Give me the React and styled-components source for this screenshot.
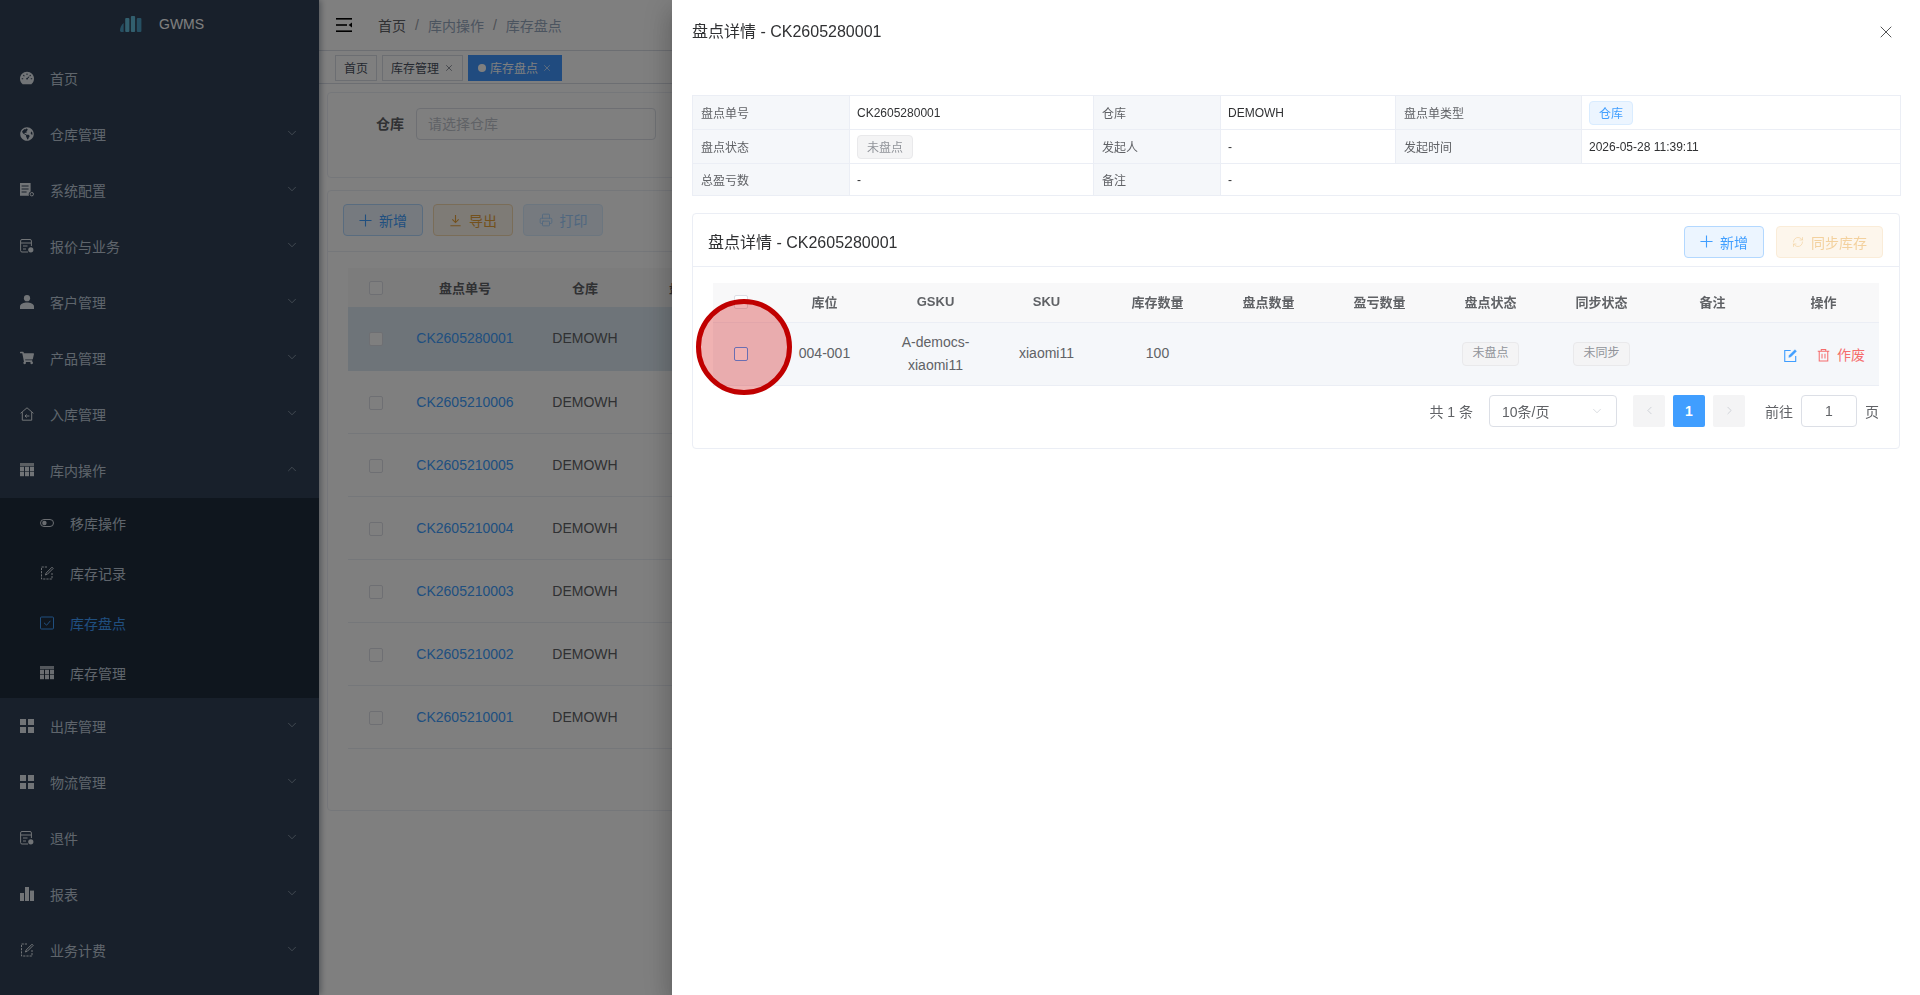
import React from 'react';
import styled, { createGlobalStyle } from 'styled-components';
import { ChevronDown, ChevronUp, ChevronLeft, ChevronRight, Printer, RefreshCw, X } from 'lucide-react';
import { AiFillDashboard } from 'react-icons/ai';
import { FaGlobeAmericas, FaShoppingCart } from 'react-icons/fa';

const GlobalStyle = createGlobalStyle`
  html, body {
    margin: 0;
    height: 100%;
    overflow: hidden;
    background: #fff;
    font-family: "Liberation Sans", "Noto Sans CJK SC", sans-serif;
    font-size: 14px;
    color: #606266;
  }
  * { box-sizing: border-box; }
`;

const Page = styled.div`
  display: flex;
  width: 1920px;
  height: 995px;
  overflow: hidden;
`;

/* ---------- sidebar ---------- */
const Sidebar = styled.aside`
  width: 319px;
  flex-shrink: 0;
  background: #304156;
  box-shadow: 2px 0 6px rgba(0, 21, 41, 0.35);
  z-index: 2;
`;

const Logo = styled.div`
  height: 50px;
  padding: 0 0 2px 120px;
  display: flex;
  align-items: center;
  gap: 17px;
  font-size: 14px;
  color: #ffffff;
`;

const MenuRow = styled.div`
  height: 56px;
  padding: 0 20px;
  display: flex;
  align-items: center;
  gap: 16px;
  font-size: 14px;
  color: #bfcbd9;
  svg { flex-shrink: 0; }
  .ic { color: #e3e8ee; }
  .gauge { margin: 0 -1px; }
  .arrow { margin-left: auto; margin-top: -2px; color: #bfcbd9; }
`;

const SubMenu = styled.div`
  background: #1f2d3d;
`;

const SubRow = styled.div`
  height: 50px;
  padding-left: 40px;
  display: flex;
  align-items: center;
  gap: 16px;
  color: ${p => (p.$active ? '#409eff' : '#bfcbd9')};
  .ic { color: ${p => (p.$active ? '#409eff' : '#d5dbe3')}; }
`;

/* ---------- page behind the drawer ---------- */
const Main = styled.main`
  flex: 1;
  min-width: 0;
`;

const TopBar = styled.div`
  height: 51px;
  border-bottom: 1px solid #d8dce5;
  padding-left: 17px;
  display: flex;
  align-items: center;
`;

const Crumbs = styled.div`
  margin-left: 26px;
  display: flex;
  align-items: center;
  gap: 9px;
  color: #97a8be;
  b { font-weight: 400; color: #606266; }
  i { font-style: normal; color: #9aa0a8; }
`;

const TagsBar = styled.div`
  height: 33px;
  border-bottom: 1px solid #d8dce5;
  padding: 4px 0 0 16px;
  display: flex;
  gap: 5px;
`;

const PageTab = styled.div`
  height: 26px;
  padding: 0 ${p => (p.$active ? 9 : 8)}px 1px;
  display: flex;
  align-items: center;
  gap: ${p => (p.$active ? 4 : 5)}px;
  font-size: 12px;
  color: ${p => (p.$active ? '#ffffff' : '#495060')};
  background: ${p => (p.$active ? '#4096ff' : '#fff')};
  border: 1px solid ${p => (p.$active ? '#4096ff' : '#d8dce5')};
`;

const Dot = styled.span`
  width: 8px;
  height: 8px;
  border-radius: 50%;
  background: #fff;
`;

const Content = styled.div`
  padding: 8px;
`;

const Card = styled.div`
  background: #fff;
  border: 1px solid #ebeef5;
  border-radius: 4px;
`;

const FilterCard = styled(Card)`
  height: 86px;
  margin-bottom: 12px;
  padding-top: 15px;
  display: flex;
  align-items: flex-start;
`;

const FilterLabel = styled.label`
  width: 88px;
  height: 32px;
  padding-right: 12px;
  line-height: 32px;
  text-align: right;
  font-weight: 700;
`;

const FilterInput = styled.div`
  width: 240px;
  height: 32px;
  padding: 0 11px;
  line-height: 30px;
  border: 1px solid #dcdfe6;
  border-radius: 4px;
  color: #c0c4cc;
`;

const ListCard = styled(Card)`
  height: 621px;
`;

const Toolbar = styled.div`
  height: 61px;
  padding: 13px 15px 0;
  display: flex;
  gap: 10px;
  border-bottom: 1px solid #ebeef5;
`;

const tones = {
  primary: ['#ecf5ff', '#b3d8ff', '#409eff'],
  warning: ['#fdf6ec', '#f5dab1', '#e6a23c'],
  primaryOff: ['#ecf5ff', '#d9ecff', '#a0cfff'],
  warningOff: ['#fdf6ec', '#faecd8', '#f3d19e'],
};

const PlainButton = styled.button`
  height: 32px;
  width: ${p => p.$width || 80}px;
  padding: 0;
  display: inline-flex;
  align-items: center;
  justify-content: center;
  gap: 7px;
  font-family: inherit;
  font-size: 14px;
  border-radius: 4px;
  background: ${p => tones[p.$tone][0]};
  border: 1px solid ${p => tones[p.$tone][1]};
  color: ${p => tones[p.$tone][2]};
`;

const ListTable = styled.table`
  margin: 16px 0 0 20px;
  width: 1500px;
  table-layout: fixed;
  border-collapse: collapse;
`;

const ListHead = styled.th`
  width: ${p => p.$w ? `${p.$w}px` : 'auto'};
  height: 39px;
  padding: 0;
  background: #f8f8f9;
  font-size: 13px;
  font-weight: 700;
  text-align: center;
  color: #606266;
`;

const ListCell = styled.td`
  height: 63px;
  padding: 0;
  text-align: center;
  border-bottom: 1px solid #ebeef5;
  background: ${p => (p.$current ? '#dde9f2' : '#fff')};
  border-bottom-color: ${p => (p.$current ? '#dde9f2' : '#ebeef5')};
`;

const OrderLink = styled.a`
  color: #409eff;
`;

const Check = styled.span`
  display: inline-block;
  width: 14px;
  height: 14px;
  vertical-align: middle;
  background: #fff;
  border: 1px solid ${p => (p.$hover ? '#409eff' : '#dcdfe6')};
  border-radius: 2px;
`;

/* ---------- drawer ---------- */
const Overlay = styled.div`
  position: fixed;
  inset: 0;
  background: rgba(0, 0, 0, 0.5);
  z-index: 10;
`;

const Drawer = styled.section`
  position: fixed;
  top: 0;
  right: 0;
  bottom: 0;
  width: 1248px;
  padding: 0 20px;
  background: #fff;
  z-index: 11;
  box-shadow: 0 8px 10px -5px rgba(0, 0, 0, 0.2), 0 16px 24px 2px rgba(0, 0, 0, 0.14), 0 6px 30px 5px rgba(0, 0, 0, 0.12);
`;

const DrawerHead = styled.header`
  height: 95px;
  padding: 20px 4px 0 0;
  display: flex;
  justify-content: space-between;
  font-size: 16px;
  line-height: 24px;
  color: #303133;
  svg { margin-top: 2px; color: #303133; }
`;

const DescTable = styled.table`
  width: 1208px;
  table-layout: fixed;
  border-collapse: collapse;
  font-size: 12px;
`;

const DescRow = styled.tr`
  height: ${p => p.$h}px;
`;

const DescLabel = styled.td`
  padding: 0 8px;
  background: #f5f7fa;
  border: 1px solid #ebeef5;
  color: #606266;
`;

const DescValue = styled.td`
  padding: 0 7px;
  border: 1px solid #ebeef5;
  color: #303133;
`;

const Tag = styled.span`
  display: inline-flex;
  align-items: center;
  justify-content: center;
  height: 24px;
  padding: 0 9px;
  font-size: 12px;
  border-radius: 4px;
  vertical-align: middle;
  background: ${p => (p.$primary ? '#ecf5ff' : '#f4f4f5')};
  border: 1px solid ${p => (p.$primary ? '#d9ecff' : '#e9e9eb')};
  color: ${p => (p.$primary ? '#409eff' : '#909399')};
`;

const DetailCard = styled(Card)`
  margin-top: 17px;
  height: 236px;
`;

const DetailHead = styled.div`
  height: 53px;
  padding: 2px 16px 0 15px;
  display: flex;
  align-items: center;
  gap: 12px;
  border-bottom: 1px solid #ebeef5;
  font-size: 16px;
  color: #303133;
  h3 { flex: 1; margin: 0; font-size: 16px; font-weight: 400; }
  button { margin-top: 1px; }
`;

const DetailBody = styled.div`
  padding: 16px 20px 0;
`;

const DetailTable = styled.table`
  width: 1166px;
  table-layout: fixed;
  border-collapse: collapse;
`;

const DetailTh = styled.th`
  width: ${p => p.$w}px;
  height: 39px;
  padding: 0 0 2px;
  font-size: 13px;
  font-weight: 700;
  text-align: center;
  color: #606266;
  background: #f8f8f9;
  border-bottom: 1px solid #ebeef5;
`;

const DetailTd = styled.td`
  position: relative;
  height: 63px;
  padding: 8px 10px;
  line-height: 23px;
  text-align: center;
  color: #606266;
  background: #f5f7fa;
  border-bottom: 1px solid #ebeef5;
`;

const Marker = styled.span`
  position: absolute;
  left: 50%;
  top: 50%;
  z-index: 5;
  width: 96px;
  height: 96px;
  margin: -55px 0 0 -45px;
  border: 5px solid #c00000;
  border-radius: 50%;
  background: rgba(204, 0, 0, 0.3);
`;

const ActionRow = styled.div`
  display: flex;
  align-items: center;
  justify-content: center;
  padding: 3px 0 0 2px;
  gap: 20px;
`;

const EditLink = styled.span`
  display: flex;
  color: #409eff;
`;

const DangerText = styled.span`
  display: inline-flex;
  align-items: center;
  gap: 7px;
  color: #f56c6c;
`;

const Pager = styled.div`
  margin-top: 9px;
  display: flex;
  align-items: center;
  justify-content: flex-end;
  height: 32px;
  color: #606266;
`;

const PagerSelect = styled.div`
  width: 128px;
  height: 32px;
  margin: 0 16px;
  padding: 0 12px;
  display: flex;
  align-items: center;
  justify-content: space-between;
  border: 1px solid #dcdfe6;
  border-radius: 4px;
  svg { color: #c0c4cc; }
`;

const PagerBtn = styled.div`
  width: 32px;
  height: 32px;
  margin-right: 8px;
  display: flex;
  align-items: center;
  justify-content: center;
  border-radius: 2px;
  font-weight: 700;
  background: ${p => (p.$active ? '#409eff' : '#f4f4f5')};
  color: ${p => (p.$active ? '#fff' : '#c0c4cc')};
`;

const PagerLabel = styled.span`
  margin-left: ${p => p.$left || 0}px;
`;

const PagerInput = styled.div`
  width: 56px;
  height: 32px;
  margin: 0 8px;
  line-height: 30px;
  text-align: center;
  border: 1px solid #dcdfe6;
  border-radius: 4px;
`;

/* ---------- drawn icons ---------- */
const Svg = ({ children, w = 14, h = 14, box = '0 0 14 14' }) => (
  <svg className="ic" width={w} height={h} viewBox={box} fill="none" stroke="currentColor" strokeWidth="1">
    {children}
  </svg>
);

const LogoMark = () => (
  <svg width="22" height="16" viewBox="0 0 22 16">
    <path d="M0 15c0-3 1-6 3.6-8v9H1z" fill="#4d9fc4" />
    <rect x="5.2" y="2" width="4.2" height="14" rx="1" fill="#64bedd" />
    <rect x="10.9" y="0" width="4.2" height="16" rx="1" fill="#64bedd" />
    <rect x="16.8" y="2" width="4.6" height="14" rx="1" fill="#4d9fc4" />
  </svg>
);

const Burger = () => (
  <svg width="16" height="14" viewBox="0 0 16 14" fill="#000">
    <rect width="16" height="1.6" />
    <rect y="6.2" width="11" height="1.6" />
    <rect y="12.4" width="16" height="1.6" />
    <path d="M16 4.4v5.2L12.6 7z" />
  </svg>
);

const UserIcon = () => (
  <Svg>
    <circle cx="7" cy="3.2" r="3.1" fill="currentColor" stroke="none" />
    <path d="M0 14v-2.4C0 9 4 7.6 7 7.6s7 1.4 7 4V14z" fill="currentColor" stroke="none" />
  </Svg>
);

const ConfigIcon = () => (
  <Svg>
    <path d="M0 0h10.6v8.6a3 3 0 0 0-1.6 4.2H0z" fill="currentColor" stroke="none" />
    <path d="M1.6 3h7M1.6 6h7M1.6 9h5" stroke="#304156" />
    <circle cx="11.8" cy="11.2" r="1.7" />
  </Svg>
);

const ReportIcon = () => (
  <Svg>
    <path d="M8 13H2a1.4 1.4 0 0 1-1.4-1.4V1.9A1.4 1.4 0 0 1 2 .5h8A1.4 1.4 0 0 1 11.4 1.9V7" />
    <path d="M.6 4h10.8M3 7h4.5M3 10h3" />
    <circle cx="10.8" cy="10.8" r="2.6" fill="currentColor" stroke="none" />
  </Svg>
);

const HouseIcon = () => (
  <Svg>
    <path d="M.6 6.3 7 .8l6.4 5.5M2.3 5.2v8h9.4V5.2" />
    <path d="M9.4 9H5M6.6 7.4 5 9l1.6 1.6" />
  </Svg>
);

const GridIcon = () => (
  <Svg>
    <g fill="currentColor" stroke="none">
      <rect width="14" height="3.2" opacity="0.75" />
      {[3.8, 8.8].map(y => [0, 5, 10].map(x => <rect key={`${x}-${y}`} x={x} y={y} width="4" height="4.4" />))}
    </g>
  </Svg>
);

const ToggleIcon = () => (
  <Svg>
    <rect x="0.5" y="3.5" width="13" height="7" rx="3.5" />
    <circle cx="4.4" cy="7" r="2.2" fill="currentColor" stroke="none" />
  </Svg>
);

const NoteIcon = () => (
  <Svg>
    <path d="M7 1H1.5v12h10.5V7" strokeDasharray="2.2 1" />
    <path d="M12 1.2 13.2 2.4 7.4 8.2 5.4 9l.8-2z" />
  </Svg>
);

const CheckIcon = () => (
  <Svg>
    <rect x="0.5" y="1" width="13" height="12" rx="1" />
    <path d="m4 6.8 2.6 2.4L10.4 4.8" />
  </Svg>
);

const SquaresIcon = () => (
  <Svg>
    <g fill="currentColor" stroke="none">
      <rect width="6" height="6" />
      <rect x="8" width="6" height="6" />
      <rect y="8" width="6" height="6" />
      <rect x="8" y="8" width="6" height="6" />
    </g>
  </Svg>
);

const BarsIcon = () => (
  <Svg>
    <g fill="currentColor" stroke="none">
      <rect y="6" width="4" height="8" />
      <rect x="5" width="4" height="14" />
      <rect x="10" y="3.6" width="4" height="10.4" />
    </g>
  </Svg>
);

const PlusIcon = () => (
  <Svg w={13} h={13}>
    <path d="M7 .5v13M.5 7h13" strokeWidth="1.2" />
  </Svg>
);

const DownloadIcon = () => (
  <Svg w={13} h={13}>
    <path d="M7 1v8M3.6 5.8 7 9.2l3.4-3.4M1.5 12.6h11" strokeWidth="1.2" />
  </Svg>
);

const EditIcon = () => (
  <Svg w={13} h={13}>
    <path d="M12.6 7.6v5.8H.8V1.6h6.4" strokeWidth="1.2" />
    <path d="M11.8.8l1.6 1.6-6 6-2.2.6.6-2.2z" fill="currentColor" strokeWidth="0.6" />
  </Svg>
);

const TrashIcon = () => (
  <Svg w={13} h={14}>
    <path d="M.8 3h12.4M4.6 3V1h4.8v2M2.4 3v10.4h9.2V3M5.4 5.6v5.2M8.6 5.6v5.2" strokeWidth="1.1" />
  </Svg>
);

/* ---------- data ---------- */
const menuTop = [
  { label: '首页', icon: <AiFillDashboard className="ic gauge" size={16} />, plain: true },
  { label: '仓库管理', icon: <FaGlobeAmericas className="ic" size={14} /> },
  { label: '系统配置', icon: <ConfigIcon /> },
  { label: '报价与业务', icon: <ReportIcon /> },
  { label: '客户管理', icon: <UserIcon /> },
  { label: '产品管理', icon: <FaShoppingCart className="ic" size={14} /> },
  { label: '入库管理', icon: <HouseIcon /> },
];

const subMenu = [
  { label: '移库操作', icon: <ToggleIcon /> },
  { label: '库存记录', icon: <NoteIcon /> },
  { label: '库存盘点', icon: <CheckIcon />, active: true },
  { label: '库存管理', icon: <GridIcon /> },
];

const menuBottom = [
  { label: '出库管理', icon: <SquaresIcon /> },
  { label: '物流管理', icon: <SquaresIcon /> },
  { label: '退件', icon: <ReportIcon /> },
  { label: '报表', icon: <BarsIcon /> },
  { label: '业务计费', icon: <NoteIcon /> },
];

const orders = ['CK2605280001', 'CK2605210006', 'CK2605210005', 'CK2605210004', 'CK2605210003', 'CK2605210002', 'CK2605210001'];

const detailCols = ['库位', 'GSKU', 'SKU', '库存数量', '盘点数量', '盈亏数量', '盘点状态', '同步状态', '备注', '操作'];

const TITLE = '盘点详情 - CK2605280001';

const Menu = ({ items }) => items.map(m => (
  <MenuRow key={m.label}>
    {m.icon}
    <span>{m.label}</span>
    {!m.plain && <ChevronDown className="arrow" size={14} strokeWidth={1} />}
  </MenuRow>
));

export default function App() {
  return (
    <>
      <GlobalStyle />
      <Page>
        <Sidebar>
          <Logo><LogoMark />GWMS</Logo>
          <Menu items={menuTop} />
          <MenuRow>
            <GridIcon />
            <span>库内操作</span>
            <ChevronUp className="arrow" size={14} strokeWidth={1} />
          </MenuRow>
          <SubMenu>
            {subMenu.map(s => (
              <SubRow key={s.label} $active={s.active}>
                {s.icon}
                <span>{s.label}</span>
              </SubRow>
            ))}
          </SubMenu>
          <Menu items={menuBottom} />
        </Sidebar>

        <Main>
          <TopBar>
            <Burger />
            <Crumbs>
              <b>首页</b><i>/</i><span>库内操作</span><i>/</i><span>库存盘点</span>
            </Crumbs>
          </TopBar>
          <TagsBar>
            <PageTab>首页</PageTab>
            <PageTab>库存管理<X size={10} strokeWidth={1.5} /></PageTab>
            <PageTab $active><Dot />库存盘点<X size={10} strokeWidth={1.5} /></PageTab>
          </TagsBar>
          <Content>
            <FilterCard>
              <FilterLabel>仓库</FilterLabel>
              <FilterInput>请选择仓库</FilterInput>
            </FilterCard>
            <ListCard>
              <Toolbar>
                <PlainButton $tone="primary"><PlusIcon />新增</PlainButton>
                <PlainButton $tone="warning"><DownloadIcon />导出</PlainButton>
                <PlainButton $tone="primaryOff"><Printer size={14} strokeWidth={1.4} />打印</PlainButton>
              </Toolbar>
              <ListTable>
                <thead>
                  <tr>
                    <ListHead $w={56}><Check /></ListHead>
                    <ListHead $w={122}>盘点单号</ListHead>
                    <ListHead $w={118}>仓库</ListHead>
                    <ListHead $w={102}>盘点状态</ListHead>
                    <ListHead />
                  </tr>
                </thead>
                <tbody>
                  {orders.map((no, i) => (
                    <tr key={no}>
                      <ListCell $current={i === 0}><Check /></ListCell>
                      <ListCell $current={i === 0}><OrderLink>{no}</OrderLink></ListCell>
                      <ListCell $current={i === 0}>DEMOWH</ListCell>
                      <ListCell $current={i === 0} />
                      <ListCell $current={i === 0} />
                    </tr>
                  ))}
                </tbody>
              </ListTable>
            </ListCard>
          </Content>
        </Main>
      </Page>

      <Overlay />
      <Drawer>
        <DrawerHead>
          <span>{TITLE}</span>
          <X size={20} strokeWidth={1} />
        </DrawerHead>

        <DescTable>
          <colgroup>
            <col width="157" />
            <col width="244" />
            <col width="127" />
            <col width="175" />
            <col width="186" />
            <col width="319" />
          </colgroup>
          <tbody>
            <DescRow $h={34}>
              <DescLabel>盘点单号</DescLabel>
              <DescValue>CK2605280001</DescValue>
              <DescLabel>仓库</DescLabel>
              <DescValue>DEMOWH</DescValue>
              <DescLabel>盘点单类型</DescLabel>
              <DescValue><Tag $primary>仓库</Tag></DescValue>
            </DescRow>
            <DescRow $h={34}>
              <DescLabel>盘点状态</DescLabel>
              <DescValue><Tag>未盘点</Tag></DescValue>
              <DescLabel>发起人</DescLabel>
              <DescValue>-</DescValue>
              <DescLabel>发起时间</DescLabel>
              <DescValue>2026-05-28 11:39:11</DescValue>
            </DescRow>
            <DescRow $h={32}>
              <DescLabel>总盈亏数</DescLabel>
              <DescValue>-</DescValue>
              <DescLabel>备注</DescLabel>
              <DescValue colSpan={3}>-</DescValue>
            </DescRow>
          </tbody>
        </DescTable>

        <DetailCard>
          <DetailHead>
            <h3>{TITLE}</h3>
            <PlainButton $tone="primary"><PlusIcon />新增</PlainButton>
            <PlainButton $tone="warningOff" $width={107}><RefreshCw size={12} strokeWidth={1.3} />同步库存</PlainButton>
          </DetailHead>
          <DetailBody>
            <DetailTable>
              <thead>
                <tr>
                  <DetailTh $w={56}><Check /></DetailTh>
                  {detailCols.map(c => <DetailTh key={c} $w={111}>{c}</DetailTh>)}
                </tr>
              </thead>
              <tbody>
                <tr>
                  <DetailTd>
                    <Check $hover />
                    <Marker />
                  </DetailTd>
                  <DetailTd>004-001</DetailTd>
                  <DetailTd>A-democs-xiaomi11</DetailTd>
                  <DetailTd>xiaomi11</DetailTd>
                  <DetailTd>100</DetailTd>
                  <DetailTd />
                  <DetailTd />
                  <DetailTd><Tag>未盘点</Tag></DetailTd>
                  <DetailTd><Tag>未同步</Tag></DetailTd>
                  <DetailTd />
                  <DetailTd>
                    <ActionRow>
                      <EditLink><EditIcon /></EditLink>
                      <DangerText><TrashIcon />作废</DangerText>
                    </ActionRow>
                  </DetailTd>
                </tr>
              </tbody>
            </DetailTable>
            <Pager>
              <span>共 1 条</span>
              <PagerSelect>10条/页<ChevronDown size={14} strokeWidth={1} /></PagerSelect>
              <PagerBtn><ChevronLeft size={13} strokeWidth={1.3} /></PagerBtn>
              <PagerBtn $active>1</PagerBtn>
              <PagerBtn><ChevronRight size={13} strokeWidth={1.3} /></PagerBtn>
              <PagerLabel $left={12}>前往</PagerLabel>
              <PagerInput>1</PagerInput>
              <PagerLabel>页</PagerLabel>
            </Pager>
          </DetailBody>
        </DetailCard>
      </Drawer>
    </>
  );
}
